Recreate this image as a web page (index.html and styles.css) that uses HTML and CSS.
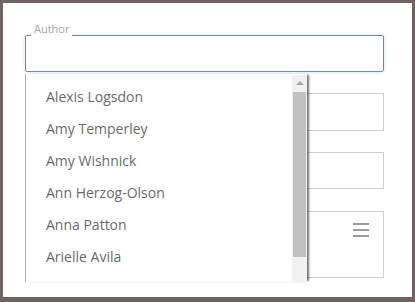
FILE: index.html
```html
<!DOCTYPE html>
<html lang="en">
  <head>
    <meta charset="UTF-8" />
    <title>Author picker</title>
    <link rel="stylesheet" href="styles.css">
  </head>
  <body>
    <div class="frame">
      <form class="form">
        <div class="field">
          <label class="float-label">Author</label>
          <input class="text-input focused" type="text" />

          <div class="dropdown">
            <ul class="options">
              <li>Alexis Logsdon</li>
              <li>Amy Temperley</li>
              <li>Amy Wishnick</li>
              <li>Ann Herzog-Olson</li>
              <li>Anna Patton</li>
              <li>Arielle Avila</li>
            </ul>
            <div class="scrollbar">
              <span class="scroll-arrow"></span>
              <span class="scroll-thumb"></span>
            </div>
          </div>
        </div>

        <div class="box box-short"></div>
        <div class="box"></div>
        <div class="box box-tall">
          <svg class="menu-icon" width="16" height="14" viewBox="0 0 16 14">
            <path d="M0 1h16M0 7h16M0 13h16" stroke="#9b9b9b" stroke-width="2" />
          </svg>
        </div>
      </form>
    </div>
  </body>
</html>
```

FILE: styles.css
```css
* {
  margin: 0;
  padding: 0;
  box-sizing: border-box;
}

body {
  font-family: "Open Sans", "Liberation Sans", sans-serif;
  background: #fff;
}

.frame {
  width: 415px;
  height: 302px;
  border: 3px solid #6e6360;
  border-bottom-width: 5px;
  background: #fff;
  padding: 32px 28px 0 22px;
  overflow: hidden;
}

.form {
  display: flex;
  flex-direction: column;
  gap: 21px;
}

.field {
  position: relative;
}

.float-label {
  position: absolute;
  top: -13px;
  left: 6px;
  padding: 0 3px;
  background: #fff;
  font-size: 11px;
  line-height: 14px;
  color: #a3a3a3;
}

.text-input {
  display: block;
  width: 100%;
  height: 37px;
  border: 1px solid #ccc;
  border-radius: 2px;
  background: #fff;
  outline: none;
}

.text-input.focused {
  border-color: #7d8896;
  box-shadow: 0 0 4px rgba(120, 160, 210, 0.35);
}

.dropdown {
  position: absolute;
  top: 39px;
  left: 0;
  width: 282px;
  height: 208px;
  display: flex;
  background: #fff;
  border-left: 1px solid #b3b3b3;
  box-shadow: 3px 0 2px -1px rgba(0, 0, 0, 0.55);
  overflow: hidden;
  z-index: 10;
}

.options {
  flex: 1;
  list-style: none;
  padding-top: 7px;
}

.options li {
  height: 32px;
  line-height: 32px;
  padding-left: 20px;
  font-size: 14px;
  color: #6b6b6b;
  white-space: nowrap;
}

.scrollbar {
  width: 15px;
  margin-top: 1px;
  background: #f1f1f1;
  display: flex;
  flex-direction: column;
  align-items: center;
}

.scroll-arrow {
  margin-top: 6px;
  width: 0;
  height: 0;
  border-left: 4px solid transparent;
  border-right: 4px solid transparent;
  border-bottom: 4px solid #a3a3a3;
}

.scroll-thumb {
  margin-top: 7px;
  width: 13px;
  height: 165px;
  background: #c1c1c1;
}

.box {
  height: 37px;
  border: 1px solid #cfcfcf;
}

.box-short {
  height: 38px;
}

.box-tall {
  height: 67px;
  margin-top: 1px;
  display: flex;
  justify-content: flex-end;
  align-items: flex-start;
  padding: 11px 14px 0 0;
}
```
